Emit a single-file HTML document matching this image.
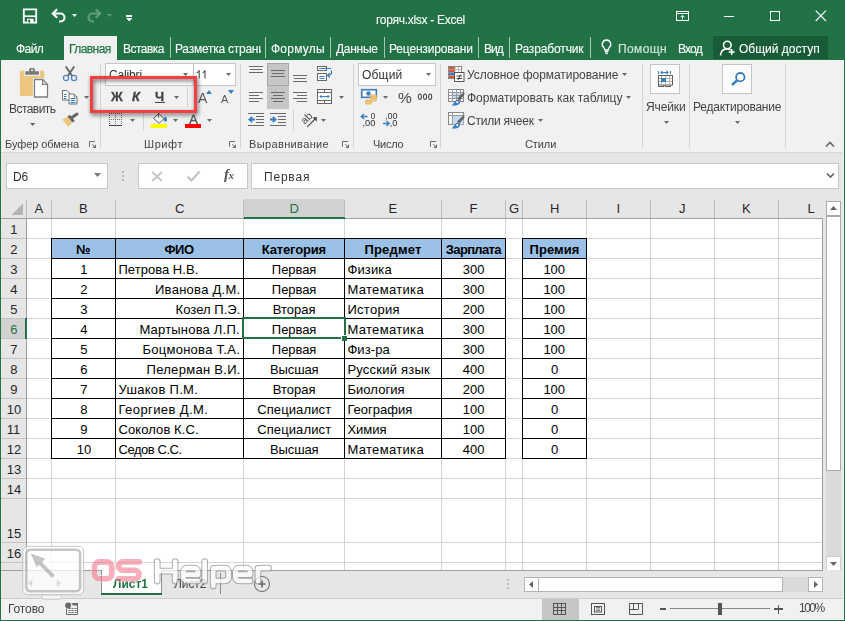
<!DOCTYPE html>
<html><head><meta charset="utf-8"><title>Excel</title>
<style>
html,body{margin:0;padding:0;}
body{width:845px;height:621px;position:relative;overflow:hidden;background:#217346;font-family:"Liberation Sans",sans-serif;}
.r{position:absolute;display:block;}
.t{position:absolute;white-space:nowrap;display:block;line-height:16px;}
.g{will-change:transform;}
</style></head><body>
<div class="r" style="left:0px;top:0px;width:845px;height:60px;background:#217346;"></div>
<svg class="r" style="left:22px;top:8px;" width="16" height="16" viewBox="0 0 16 16"><path d="M1.800 1.300h12.400v13.400h-12.400z" fill="none" stroke="#fff" stroke-width="1.800"/><path d="M1.800 8.200h12.400" stroke="#fff" stroke-width="1.600"/><path d="M5 14.500v-3.800h6.500v3.800z" fill="#fff"/><rect x="6.200" y="11.800" width="2" height="2.700" fill="#217346"/></svg>
<svg class="r" style="left:51px;top:8px;" width="16" height="15" viewBox="0 0 16 15"><path d="M2 5.500h7.500a4 4 0 0 1 0 8H8" fill="none" stroke="#fff" stroke-width="2.100"/><path d="M6.200 1.200L1.800 5.500L6.200 9.800" fill="none" stroke="#fff" stroke-width="2.100"/></svg>
<svg class="r" style="left:72px;top:14px;" width="5" height="3" viewBox="0 0 5 3"><path d="M0 0H5L2.5 3Z" fill="#fff"/></svg>
<svg class="r" style="left:86px;top:8px;opacity:.3;" width="16" height="15" viewBox="0 0 16 15"><path d="M14 5.500H6.500a4 4 0 0 0 0 8H8" fill="none" stroke="#fff" stroke-width="2.100"/><path d="M9.800 1.200L14.200 5.500L9.800 9.800" fill="none" stroke="#fff" stroke-width="2.100"/></svg>
<svg class="r" style="left:107px;top:14px;" width="5" height="3" viewBox="0 0 5 3"><path d="M0 0H5L2.5 3Z" fill="rgba(255,255,255,.3)"/></svg>
<div class="r" style="left:126px;top:15px;width:6px;height:1.5px;background:#fff;"></div>
<svg class="r" style="left:125.75px;top:17.55px;" width="6.5" height="3.5" viewBox="0 0 6.5 3.5"><path d="M0 0H6.5L3.25 3.5Z" fill="#fff"/></svg>
<span class="t g" style="left:376.30px;top:12px;font-size:12px;line-height:16px;color:#fff;letter-spacing:-0.288px;-webkit-text-stroke:.1px #fff;">горяч.xlsx - Excel</span>
<svg class="r" style="left:676px;top:11px;" width="14" height="11" viewBox="0 0 14 11"><rect x=".5" y=".5" width="12" height="9" fill="none" stroke="#fff"/><path d="M.5 2.500h12" stroke="#fff"/><path d="M6.500 8.500V4.500M4.500 6.300L6.500 4.300L8.500 6.300" fill="none" stroke="#fff"/></svg>
<div class="r" style="left:724px;top:16px;width:10px;height:1px;background:#fff;"></div>
<svg class="r" style="left:770px;top:11px;" width="11" height="11" viewBox="0 0 11 11"><rect x=".5" y=".5" width="9" height="9" fill="none" stroke="#fff"/></svg>
<svg class="r" style="left:815px;top:10px;" width="12" height="12" viewBox="0 0 12 12"><path d="M.7 .7L11 11M11 .7L.7 11" stroke="#fff" stroke-width="1.100"/></svg>
<div class="r" style="left:64px;top:36px;width:53px;height:24px;background:#f1f1f1;"></div>
<span class="t g" style="left:16.30px;top:41px;font-size:12px;line-height:16px;color:#fff;letter-spacing:-0.567px;-webkit-text-stroke:.1px #fff;">Файл</span>
<span class="t g" style="left:69.00px;top:41px;font-size:12px;line-height:16px;color:#217346;letter-spacing:-0.567px;-webkit-text-stroke:.25px #217346;">Главная</span>
<span class="t g" style="left:123.00px;top:41px;font-size:12px;line-height:16px;color:#fff;letter-spacing:-0.533px;-webkit-text-stroke:.1px #fff;">Вставка</span>
<div class="r" style="left:170px;top:37px;width:1px;height:21px;background:rgba(255,255,255,.6);"></div>
<div class="r" style="left:265px;top:37px;width:1px;height:21px;background:rgba(255,255,255,.6);"></div>
<div class="r" style="left:330px;top:37px;width:1px;height:21px;background:rgba(255,255,255,.6);"></div>
<div class="r" style="left:384px;top:37px;width:1px;height:21px;background:rgba(255,255,255,.6);"></div>
<div class="r" style="left:478px;top:37px;width:1px;height:21px;background:rgba(255,255,255,.6);"></div>
<div class="r" style="left:509px;top:37px;width:1px;height:21px;background:rgba(255,255,255,.6);"></div>
<div class="r" style="left:590px;top:37px;width:1px;height:21px;background:rgba(255,255,255,.6);"></div>
<span class="t g" style="left:175.00px;top:41px;font-size:12px;line-height:16px;color:#fff;letter-spacing:-0.243px;-webkit-text-stroke:.1px #fff;width:86.400px;overflow:hidden;">Разметка страни</span>
<span class="t g" style="left:271.00px;top:41px;font-size:12px;line-height:16px;color:#fff;letter-spacing:0.233px;-webkit-text-stroke:.1px #fff;">Формулы</span>
<span class="t g" style="left:336.20px;top:41px;font-size:12px;line-height:16px;color:#fff;letter-spacing:-0.280px;-webkit-text-stroke:.1px #fff;">Данные</span>
<span class="t g" style="left:389.40px;top:41px;font-size:12px;line-height:16px;color:#fff;letter-spacing:-0.167px;-webkit-text-stroke:.1px #fff;">Рецензировани</span>
<span class="t g" style="left:484.20px;top:41px;font-size:12px;line-height:16px;color:#fff;letter-spacing:-0.950px;-webkit-text-stroke:.1px #fff;">Вид</span>
<span class="t g" style="left:515.00px;top:41px;font-size:12px;line-height:16px;color:#fff;letter-spacing:-0.140px;-webkit-text-stroke:.1px #fff;">Разработчик</span>
<svg class="r" style="left:600px;top:39px;" width="13" height="16" viewBox="0 0 13 16"><path d="M6.500 1a4.300 4.300 0 0 0-2.600 7.700c.5.500.8 1.200.8 2.300h3.600c0-1.100.3-1.800.8-2.300A4.300 4.300 0 0 0 6.500 1z" fill="none" stroke="#fff" stroke-width="1.300"/><path d="M4.800 12.600h3.400M5.200 14.300h2.600" stroke="#fff" stroke-width="1.200"/></svg>
<span class="t g" style="left:618.40px;top:41px;font-size:12px;line-height:16px;color:#d0e3d8;letter-spacing:0.400px;-webkit-text-stroke:.2px #d0e3d8;">Помощн</span>
<span class="t g" style="left:678.20px;top:41px;font-size:12px;line-height:16px;color:#fff;letter-spacing:-0.833px;-webkit-text-stroke:.1px #fff;">Вход</span>
<div class="r" style="left:713px;top:36px;width:115px;height:23px;background:#185c37;"></div>
<svg class="r" style="left:719px;top:40px;" width="17" height="16" viewBox="0 0 17 16"><circle cx="8.300" cy="5" r="3.800" fill="none" stroke="#fff" stroke-width="1.600"/><path d="M1.500 15.500c.3-4 2.500-6.600 6.800-6.600 1.500 0 2.600.3 3.500 1" fill="none" stroke="#fff" stroke-width="1.600"/><path d="M12.700 9v6M9.700 12h6" stroke="#fff" stroke-width="1.500"/></svg>
<span class="t g" style="left:739.00px;top:41px;font-size:12px;line-height:16px;color:#fff;-webkit-text-stroke:.1px #fff;">Общий доступ</span>
<div class="r" style="left:1px;top:60px;width:842px;height:92px;background:#f1f1f1;"></div>
<div class="r" style="left:1px;top:152px;width:842px;height:1px;background:#d9d9d9;"></div>
<div class="r" style="left:1px;top:153px;width:842px;height:46px;background:#e6e6e6;"></div>
<div class="r" style="left:100px;top:64px;width:1px;height:84px;background:#d4d4d4;"></div>
<div class="r" style="left:240px;top:64px;width:1px;height:84px;background:#d4d4d4;"></div>
<div class="r" style="left:353px;top:64px;width:1px;height:84px;background:#d4d4d4;"></div>
<div class="r" style="left:440px;top:64px;width:1px;height:84px;background:#d4d4d4;"></div>
<div class="r" style="left:642px;top:64px;width:1px;height:84px;background:#d4d4d4;"></div>
<div class="r" style="left:689px;top:64px;width:1px;height:84px;background:#d4d4d4;"></div>
<div class="r" style="left:785px;top:64px;width:1px;height:84px;background:#d4d4d4;"></div>
<svg class="r" style="left:19px;top:66px;" width="31" height="33" viewBox="0 0 31 33"><rect x=".9" y="4.600" width="24.400" height="25.500" rx="1.800" fill="#ecc67e"/><rect x="5.200" y="4" width="15.900" height="5.900" fill="#f1f1f1"/><rect x="6.200" y="5.200" width="13.800" height="3.500" rx=".7" fill="#7a7a7a"/><rect x="10.100" y="2.100" width="5.800" height="4.500" rx="1.600" fill="#7a7a7a"/><circle cx="13" cy="4.300" r="1" fill="#f4f4f4"/><path d="M15.500 13.500H23.600L28.500 18.400V31H15.500z" fill="#fff" stroke="#f1f1f1" stroke-width="3.200"/><path d="M15.500 13.500H23.600L28.500 18.400V31H15.500z" fill="#fff" stroke="#7e7e7e" stroke-width="1.300"/><path d="M23.600 13.500V18.400H28.500" fill="none" stroke="#7e7e7e" stroke-width="1.300"/></svg>
<span class="t g" style="left:8.60px;top:101px;font-size:12px;line-height:16px;color:#444;letter-spacing:-0.543px;">Вставить</span>
<svg class="r" style="left:30px;top:122.9px;" width="5.2" height="3" viewBox="0 0 5.2 3"><path d="M0 0H5.2L2.6 3Z" fill="#6a6a6a"/></svg>
<svg class="r" style="left:62px;top:65px;" width="16" height="17" viewBox="0 0 16 17"><path d="M3.800 1.500L10.200 11M12.200 1.500L5.800 11" stroke="#6a6a6a" stroke-width="2" fill="none"/><circle cx="4" cy="13" r="2.600" fill="none" stroke="#4a86c5" stroke-width="1.200"/><circle cx="12" cy="13" r="2.600" fill="none" stroke="#4a86c5" stroke-width="1.200"/></svg>
<svg class="r" style="left:61px;top:89px;" width="17" height="16" viewBox="0 0 17 16"><path d="M1.500 1.500h4.500l2.500 2.500v7h-7z" fill="#fff" stroke="#6e6e6e"/><path d="M3 5.500h2.500M3 7.500h2.500M3 9.500h2" stroke="#3a7ebf"/><path d="M8 5h5l3 3v7h-8z" fill="#fff" stroke="#6e6e6e"/><path d="M13 5v3h3" fill="none" stroke="#6e6e6e" stroke-width=".8"/><path d="M9.500 9.500h5M9.500 11.500h5M9.500 13.500h5" stroke="#3a7ebf"/></svg>
<svg class="r" style="left:83.5px;top:95.5px;" width="5" height="3" viewBox="0 0 5 3"><path d="M0 0H5L2.5 3Z" fill="#6a6a6a"/></svg>
<svg class="r" style="left:62px;top:112px;" width="17" height="16" viewBox="0 0 17 16"><path d="M.4 7.500L5.500 4.500L10.500 10.500L6 14.700z" fill="#ecc67e"/><path d="M5.500 4.500L7.800 2.800L12.800 8.800L10.500 10.500z" fill="#666"/><path d="M10.300 5.300L15 2" stroke="#666" stroke-width="3" stroke-linecap="round"/></svg>
<span class="t g" style="left:4.70px;top:137px;font-size:11px;line-height:14px;color:#444;letter-spacing:-0.064px;">Буфер обмена</span>
<svg class="r" style="left:89px;top:141px;" width="8" height="8" viewBox="0 0 8 8"><path d="M.5 5.800V.5H6" fill="none" stroke="#6e6e6e"/><path d="M3.200 3.200L5.500 5.500" stroke="#6e6e6e"/><path d="M7 3.300V7H3.300z" fill="#6e6e6e"/></svg>
<div class="r" style="left:105px;top:63px;width:89px;height:23px;background:#fff;border:1px solid #c6c6c6;box-sizing:border-box;"></div>
<div class="r" style="left:193px;top:63px;width:43px;height:23px;background:#fff;border:1px solid #c6c6c6;box-sizing:border-box;"></div>
<span class="t g" style="left:108.70px;top:67px;font-size:12px;line-height:16px;color:#333;letter-spacing:-0.150px;">Calibri</span>
<svg class="r" style="left:183px;top:73px;" width="5" height="3" viewBox="0 0 5 3"><path d="M0 0H5L2.5 3Z" fill="#6a6a6a"/></svg>
<svg class="r" style="left:196px;top:69.5px;" width="11" height="9" viewBox="0 0 11 9"><path d="M.9 2.900L3.200 .9V8.600M6.700 2.900L9 .9V8.600" stroke="#444" stroke-width="1.050" fill="none"/></svg>
<svg class="r" style="left:225.5px;top:73px;" width="5" height="3" viewBox="0 0 5 3"><path d="M0 0H5L2.5 3Z" fill="#6a6a6a"/></svg>
<span class="t g" style="left:110.60px;top:88px;font-size:13px;line-height:17px;color:#444;font-weight:bold;-webkit-text-stroke:.3px #444;">Ж</span>
<span class="t g" style="left:132.40px;top:88px;font-size:13px;line-height:17px;color:#444;font-weight:bold;font-style:italic;-webkit-text-stroke:.3px #444;">К</span>
<span class="t g" style="left:155.00px;top:88px;font-size:13px;line-height:17px;color:#444;font-weight:bold;-webkit-text-stroke:.3px #444;">Ч</span>
<div class="r" style="left:155px;top:102px;width:10px;height:1px;background:#444;"></div>
<svg class="r" style="left:174px;top:95.5px;" width="5" height="3" viewBox="0 0 5 3"><path d="M0 0H5L2.5 3Z" fill="#6a6a6a"/></svg>
<div class="r" style="left:187px;top:87px;width:1px;height:20px;background:#d4d4d4;"></div>
<span class="t g" style="left:198.40px;top:89px;font-size:14px;line-height:18px;color:#555;">A</span>
<svg class="r" style="left:205.5px;top:89.5px;" width="6" height="4" viewBox="0 0 6 4"><path d="M0 4L3 0L6 4z" fill="#3a7ebf"/></svg>
<span class="t g" style="left:221.40px;top:92px;font-size:11px;line-height:14px;color:#555;">A</span>
<svg class="r" style="left:227.5px;top:89.8px;" width="6" height="4" viewBox="0 0 6 4"><path d="M0 0H6L3 4z" fill="#3a7ebf"/></svg>
<svg class="r" style="left:109px;top:113px;shape-rendering:crispEdges;" width="14" height="14" viewBox="0 0 14 14"><path d="M0 .5h13M0 6.500h13" stroke="#6a6a6a" stroke-dasharray="1 1" fill="none"/><path d="M.5 0v12M6.500 0v12M12.500 0v12" stroke="#6a6a6a" stroke-dasharray="1 1" fill="none"/><path d="M0 12.500h13" stroke="#444" stroke-width="1"/></svg>
<svg class="r" style="left:129.8px;top:119px;" width="5" height="3" viewBox="0 0 5 3"><path d="M0 0H5L2.5 3Z" fill="#6a6a6a"/></svg>
<div class="r" style="left:143px;top:113px;width:1px;height:18px;background:#d4d4d4;"></div>
<svg class="r" style="left:151px;top:110px;" width="17" height="15" viewBox="0 0 17 15"><path d="M7.800 3.600L13 8.600L8 13.300L2.600 8.300z" fill="#fff" stroke="#555" stroke-width=".95"/><path d="M7.600 7.500V1.500" stroke="#555" stroke-width=".95"/><path d="M14.300 6c1.300 1.700 1.800 2.900 1.800 3.900a1.700 1.700 0 0 1-3.400 0c0-1 .5-2.200 1.600-3.900z" fill="#3a7ebf"/></svg>
<div class="r" style="left:151px;top:124px;width:16px;height:4px;background:#ffff00;"></div>
<svg class="r" style="left:173px;top:119px;" width="5" height="3" viewBox="0 0 5 3"><path d="M0 0H5L2.5 3Z" fill="#6a6a6a"/></svg>
<span class="t g" style="left:188.80px;top:111px;font-size:13.5px;line-height:17px;color:#555;-webkit-text-stroke:.35px #555;">A</span>
<div class="r" style="left:185px;top:124px;width:16px;height:4px;background:#ff0000;"></div>
<svg class="r" style="left:206.9px;top:119px;" width="5" height="3" viewBox="0 0 5 3"><path d="M0 0H5L2.5 3Z" fill="#6a6a6a"/></svg>
<span class="t g" style="left:143.70px;top:137px;font-size:11px;line-height:14px;color:#444;letter-spacing:0.575px;">Шрифт</span>
<svg class="r" style="left:229px;top:141px;" width="8" height="8" viewBox="0 0 8 8"><path d="M.5 5.800V.5H6" fill="none" stroke="#6e6e6e"/><path d="M3.200 3.200L5.500 5.500" stroke="#6e6e6e"/><path d="M7 3.300V7H3.300z" fill="#6e6e6e"/></svg>
<div class="r" style="left:267px;top:63px;width:22px;height:23px;background:#c6c6c6;border:1px solid #a6a6a6;box-sizing:border-box;"></div>
<div class="r" style="left:267px;top:86px;width:22px;height:23px;background:#c6c6c6;"></div>
<div class="r" style="left:249px;top:66px;width:14px;height:1px;background:#6a6a6a;"></div>
<div class="r" style="left:250px;top:69px;width:12px;height:1px;background:#6a6a6a;"></div>
<div class="r" style="left:249px;top:72px;width:14px;height:1px;background:#6a6a6a;"></div>
<div class="r" style="left:271px;top:70px;width:14px;height:1px;background:#6a6a6a;"></div>
<div class="r" style="left:272px;top:73px;width:12px;height:1px;background:#6a6a6a;"></div>
<div class="r" style="left:271px;top:76px;width:14px;height:1px;background:#6a6a6a;"></div>
<div class="r" style="left:293px;top:75px;width:14px;height:1px;background:#6a6a6a;"></div>
<div class="r" style="left:294px;top:78px;width:12px;height:1px;background:#6a6a6a;"></div>
<div class="r" style="left:293px;top:81px;width:14px;height:1px;background:#6a6a6a;"></div>
<div class="r" style="left:249px;top:92px;width:14px;height:1px;background:#6a6a6a;"></div>
<div class="r" style="left:249px;top:95px;width:10px;height:1px;background:#6a6a6a;"></div>
<div class="r" style="left:249px;top:98px;width:14px;height:1px;background:#6a6a6a;"></div>
<div class="r" style="left:249px;top:101px;width:10px;height:1px;background:#6a6a6a;"></div>
<div class="r" style="left:271px;top:92px;width:14px;height:1px;background:#6a6a6a;"></div>
<div class="r" style="left:273px;top:95px;width:10px;height:1px;background:#6a6a6a;"></div>
<div class="r" style="left:271px;top:98px;width:14px;height:1px;background:#6a6a6a;"></div>
<div class="r" style="left:273px;top:101px;width:10px;height:1px;background:#6a6a6a;"></div>
<div class="r" style="left:293px;top:92px;width:14px;height:1px;background:#6a6a6a;"></div>
<div class="r" style="left:297px;top:95px;width:10px;height:1px;background:#6a6a6a;"></div>
<div class="r" style="left:293px;top:98px;width:14px;height:1px;background:#6a6a6a;"></div>
<div class="r" style="left:297px;top:101px;width:10px;height:1px;background:#6a6a6a;"></div>
<svg class="r" style="left:317px;top:66px;" width="17" height="16" viewBox="0 0 17 16"><rect x=".5" y=".5" width="9" height="4" fill="#fff" stroke="#666"/><path d="M2 2.500h12" stroke="#3a7ebf"/><rect x=".5" y="7.500" width="9" height="7" fill="#fff" stroke="#666"/><path d="M2.500 10.500h5M2.500 12.500h5" stroke="#3a7ebf"/><path d="M14 4.500c1.500 2 .5 5-3 5" fill="none" stroke="#3a7ebf" stroke-width="1.200"/><path d="M12.800 7.300L10.500 9.500L12.800 11.500" fill="none" stroke="#3a7ebf" stroke-width="1.200"/></svg>
<svg class="r" style="left:317px;top:89px;" width="16" height="15" viewBox="0 0 16 15"><rect x=".5" y=".5" width="14" height="14" fill="#fff" stroke="#666"/><path d="M.5 3.500h14M.5 11.500h14M7.500 .5v3M7.500 11.500v3" stroke="#666"/><path d="M3 7.500h9M4.500 6L3 7.500L4.500 9M10.500 6L12 7.500L10.500 9" fill="none" stroke="#3a7ebf" stroke-width="1"/></svg>
<svg class="r" style="left:338.9px;top:95.5px;" width="5" height="3" viewBox="0 0 5 3"><path d="M0 0H5L2.5 3Z" fill="#6a6a6a"/></svg>
<svg class="r" style="left:248px;top:113px;" width="17" height="13" viewBox="0 0 17 13"><path d="M0 .5h16M8 3.500h8M8 6.500h8M8 9.500h8M0 12.500h16" stroke="#6a6a6a"/><path d="M7 6.500H1.500M4.200 3.800L1.400 6.500L4.200 9.200" fill="none" stroke="#3a7ebf" stroke-width="1.800"/></svg>
<svg class="r" style="left:270px;top:113px;" width="17" height="13" viewBox="0 0 17 13"><path d="M0 .5h16M8 3.500h8M8 6.500h8M8 9.500h8M0 12.500h16" stroke="#6a6a6a"/><path d="M0 6.500H5.500M2.800 3.800L5.600 6.500L2.800 9.200" fill="none" stroke="#3a7ebf" stroke-width="1.800"/></svg>
<div class="r" style="left:293px;top:110px;width:1px;height:21px;background:#d4d4d4;"></div>
<svg class="r" style="left:300px;top:111px;" width="18" height="17" viewBox="0 0 18 17"><text transform="translate(4.800 13.800) rotate(-45)" font-family="Liberation Sans" font-size="10.500" fill="#4a4a4a">ab</text><path d="M7.300 15.800L16.500 6.500" fill="none" stroke="#4a4a4a" stroke-width="1.200"/><path d="M12.300 6.200H16.800V10.700z" fill="#4a4a4a"/></svg>
<svg class="r" style="left:321.2px;top:119px;" width="5" height="3" viewBox="0 0 5 3"><path d="M0 0H5L2.5 3Z" fill="#6a6a6a"/></svg>
<span class="t g" style="left:249.00px;top:137px;font-size:11px;line-height:14px;color:#444;letter-spacing:0.364px;">Выравнивание</span>
<svg class="r" style="left:342px;top:141px;" width="8" height="8" viewBox="0 0 8 8"><path d="M.5 5.800V.5H6" fill="none" stroke="#6e6e6e"/><path d="M3.200 3.200L5.500 5.500" stroke="#6e6e6e"/><path d="M7 3.300V7H3.300z" fill="#6e6e6e"/></svg>
<div class="r" style="left:358px;top:63px;width:78px;height:23px;background:#fff;border:1px solid #c6c6c6;box-sizing:border-box;"></div>
<span class="t g" style="left:361.70px;top:67px;font-size:12px;line-height:16px;color:#333;letter-spacing:0.200px;">Общий</span>
<svg class="r" style="left:425.8px;top:73px;" width="5" height="3" viewBox="0 0 5 3"><path d="M0 0H5L2.5 3Z" fill="#6a6a6a"/></svg>
<svg class="r" style="left:360px;top:88px;" width="19" height="18" viewBox="0 0 19 18"><rect x="1.700" y="1.700" width="14.600" height="7.600" fill="#fff" stroke="#3a7ebf" stroke-width="1.600"/><circle cx="8.500" cy="5.500" r="2.200" fill="#3a7ebf"/><g fill="#f3c987" stroke="#e0a850" stroke-width=".5"><ellipse cx="13.500" cy="8" rx="3.400" ry="1.300"/><ellipse cx="13.500" cy="10" rx="3.400" ry="1.300"/><ellipse cx="13.500" cy="12" rx="3.400" ry="1.300"/><ellipse cx="8.500" cy="13" rx="3.400" ry="1.300"/><ellipse cx="8.500" cy="15" rx="3.400" ry="1.300"/></g></svg>
<svg class="r" style="left:382.8px;top:95.5px;" width="5" height="3" viewBox="0 0 5 3"><path d="M0 0H5L2.5 3Z" fill="#6a6a6a"/></svg>
<span class="t g" style="left:397.50px;top:88px;font-size:15.5px;line-height:19px;color:#444;">%</span>
<svg class="r" style="left:417px;top:93px;" width="16" height="8" viewBox="0 0 16 8"><g fill="none" stroke="#444" stroke-width="1.050"><ellipse cx="2.850" cy="3.700" rx="1.550" ry="2.700"/><ellipse cx="8" cy="3.700" rx="1.550" ry="2.700"/><ellipse cx="13.150" cy="3.700" rx="1.550" ry="2.700"/></g></svg>
<svg class="r" style="left:360px;top:112px;" width="18" height="16" viewBox="0 0 18 16"><path d="M7.500 4.500H1.500M4 2L1.300 4.500L4 7" fill="none" stroke="#3a7ebf" stroke-width="1.400"/><text x="10.800" y="7.200" font-family="Liberation Sans" font-size="8.800" fill="#333" textLength="4.600" lengthAdjust="spacingAndGlyphs">0</text><text x="2.500" y="14.300" font-family="Liberation Sans" font-size="8.800" fill="#333" textLength="13" lengthAdjust="spacingAndGlyphs">,00</text></svg>
<svg class="r" style="left:382px;top:112px;" width="18" height="16" viewBox="0 0 18 16"><text x="3" y="7.200" font-family="Liberation Sans" font-size="8.800" fill="#333" textLength="12.500" lengthAdjust="spacingAndGlyphs">,00</text><path d="M1 11.500h6M4.500 9L7.200 11.500L4.500 14" fill="none" stroke="#3a7ebf" stroke-width="1.400"/><text x="7.700" y="14.300" font-family="Liberation Sans" font-size="8.800" fill="#333" textLength="7.700" lengthAdjust="spacingAndGlyphs">,0</text></svg>
<span class="t g" style="left:373.40px;top:137px;font-size:11px;line-height:14px;color:#444;letter-spacing:-0.225px;">Число</span>
<svg class="r" style="left:430px;top:141px;" width="8" height="8" viewBox="0 0 8 8"><path d="M.5 5.800V.5H6" fill="none" stroke="#6e6e6e"/><path d="M3.200 3.200L5.500 5.500" stroke="#6e6e6e"/><path d="M7 3.300V7H3.300z" fill="#6e6e6e"/></svg>
<svg class="r" style="left:448px;top:66px;" width="17" height="17" viewBox="0 0 17 17"><rect x=".5" y=".5" width="13" height="12" fill="#fff" stroke="#888"/><rect x="1" y="1" width="6" height="5" fill="#d9553f"/><rect x="1" y="6" width="6" height="3.500" fill="#3a7ebf"/><rect x="1" y="9.500" width="6" height="2.500" fill="#d9553f"/><path d="M7 .5v12M.5 3.500h13M.5 6.500h13M.5 9.500h13M10.500 .5v6" stroke="#aaa" stroke-width=".8"/><rect x="6.500" y="6.500" width="9.500" height="9" fill="#fff" stroke="#555"/><path d="M8.500 10h5.500M8.500 12.500h5.500M12.500 8.500L10 14" stroke="#333" stroke-width=".9"/></svg>
<span class="t g" style="left:467.30px;top:67px;font-size:12px;line-height:16px;color:#444;letter-spacing:-0.059px;">Условное форматирование</span>
<svg class="r" style="left:621.9px;top:73px;" width="5" height="3" viewBox="0 0 5 3"><path d="M0 0H5L2.5 3Z" fill="#6a6a6a"/></svg>
<svg class="r" style="left:448px;top:89px;" width="17" height="17" viewBox="0 0 17 17"><rect x=".5" y=".5" width="15" height="12" fill="#fff" stroke="#888"/><rect x="4.500" y="3.500" width="8" height="6" fill="#c5daef"/><path d="M.5 3.500h15M.5 6.500h15M.5 9.500h15M4.500 .5v12M8.500 .5v12M12.500 .5v12" stroke="#999"/><path d="M16.300 2.500L9 9.500L11.300 11.800L16.300 6z" fill="#666"/><path d="M3.500 16.300c1.500-.6 2.200-2.800 4.200-4.800 1.100-1.100 2.800-1 3.700 0 .9 1 .8 2.600-.3 3.400-2.200 1.700-5 2-7.600 1.400z" fill="#3a7ebf"/><circle cx="9.300" cy="13.200" r="1.100" fill="#fff"/></svg>
<span class="t g" style="left:467.30px;top:90px;font-size:12px;line-height:16px;color:#444;letter-spacing:-0.029px;">Форматировать как таблицу</span>
<svg class="r" style="left:625.8px;top:96px;" width="5" height="3" viewBox="0 0 5 3"><path d="M0 0H5L2.5 3Z" fill="#6a6a6a"/></svg>
<svg class="r" style="left:448px;top:112px;" width="17" height="17" viewBox="0 0 17 17"><rect x=".5" y=".5" width="15" height="12" fill="#fff" stroke="#888"/><rect x="4.500" y="3.500" width="11" height="9" fill="#c5daef"/><path d="M.5 3.500h15M4.500 .5v12" stroke="#999"/><path d="M16.300 2.500L9 9.500L11.300 11.800L16.300 6z" fill="#666"/><path d="M3.500 16.300c1.500-.6 2.200-2.800 4.200-4.800 1.100-1.100 2.800-1 3.700 0 .9 1 .8 2.600-.3 3.400-2.200 1.700-5 2-7.600 1.400z" fill="#3a7ebf"/><circle cx="9.300" cy="13.200" r="1.100" fill="#fff"/></svg>
<span class="t g" style="left:467.30px;top:113px;font-size:12px;line-height:16px;color:#444;letter-spacing:-0.230px;">Стили ячеек</span>
<svg class="r" style="left:538.1px;top:119px;" width="5" height="3" viewBox="0 0 5 3"><path d="M0 0H5L2.5 3Z" fill="#6a6a6a"/></svg>
<span class="t g" style="left:525.20px;top:137px;font-size:11px;line-height:14px;color:#444;letter-spacing:-0.100px;">Стили</span>
<div class="r" style="left:650px;top:64px;width:30px;height:30px;background:#fbfbfb;border:1px solid #c4c4c4;box-sizing:border-box;"></div>
<svg class="r" style="left:657px;top:70px;" width="17" height="18" viewBox="0 0 17 18"><path d="M1.500 1v3M13.500 1v3M4 2.500h7M5.500 1L4 2.500L5.500 4M9.500 1L11 2.500L9.500 4" fill="none" stroke="#3a7ebf" stroke-width="1.100"/><rect x="1.500" y="5.500" width="14" height="9.500" fill="#fff" stroke="#5e5e5e"/><path d="M4.500 6v8.500M8.500 6v8.500M12.500 6v8.500M2 8.500h13M2 11.500h13" stroke="#b4b4b4"/><rect x="4" y="8" width="5" height="4" fill="#3a7ebf"/><path d="M1.500 15v1.500h5.500v-1.500M8.500 15v1.500h5v-1.500" fill="none" stroke="#5e5e5e"/></svg>
<span class="t g" style="left:646.00px;top:99px;font-size:12px;line-height:16px;color:#444;letter-spacing:-0.120px;">Ячейки</span>
<svg class="r" style="left:663.5px;top:121px;" width="5" height="3" viewBox="0 0 5 3"><path d="M0 0H5L2.5 3Z" fill="#6a6a6a"/></svg>
<div class="r" style="left:722px;top:64px;width:30px;height:30px;background:#fbfbfb;border:1px solid #c4c4c4;box-sizing:border-box;"></div>
<svg class="r" style="left:730px;top:71px;" width="16" height="16" viewBox="0 0 16 16"><circle cx="10.300" cy="6.200" r="4.200" fill="#fff" stroke="#3a7ebf" stroke-width="1.800"/><path d="M7 9.500L2 14" stroke="#3a7ebf" stroke-width="2.400"/></svg>
<span class="t g" style="left:693.00px;top:99px;font-size:12px;line-height:16px;color:#444;letter-spacing:-0.231px;">Редактирование</span>
<svg class="r" style="left:734.9px;top:121px;" width="5" height="3" viewBox="0 0 5 3"><path d="M0 0H5L2.5 3Z" fill="#6a6a6a"/></svg>
<svg class="r" style="left:825px;top:141px;" width="10" height="6" viewBox="0 0 10 6"><path d="M1 5.500L5 1.500L9 5.500" fill="none" stroke="#666" stroke-width="1.600"/></svg>
<div class="r" style="left:90px;top:76px;width:107px;height:37px;box-sizing:border-box;border:3px solid #f83e3e;filter:drop-shadow(1.500px 2.500px 2.200px rgba(0,0,0,.62));"></div>
<div class="r" style="left:6px;top:163px;width:102px;height:26px;background:#fff;border:1px solid #c8c8c8;box-sizing:border-box;"></div>
<span class="t g" style="left:13.30px;top:169px;font-size:12px;line-height:16px;color:#333;letter-spacing:-0.100px;">D6</span>
<svg class="r" style="left:93.6px;top:173px;" width="7" height="4" viewBox="0 0 7 4"><path d="M0 0H7L3.5 4Z" fill="#777"/></svg>
<div class="r" style="left:122px;top:171px;width:2px;height:2px;background:#bcbcbc;"></div>
<div class="r" style="left:122px;top:175px;width:2px;height:2px;background:#bcbcbc;"></div>
<div class="r" style="left:122px;top:179px;width:2px;height:2px;background:#bcbcbc;"></div>
<div class="r" style="left:138px;top:163px;width:110px;height:26px;background:#fff;border:1px solid #c8c8c8;box-sizing:border-box;"></div>
<svg class="r" style="left:151px;top:171px;" width="12" height="11" viewBox="0 0 12 11"><path d="M1 1L11 10M11 1L1 10" stroke="#c4c4c4" stroke-width="1.700"/></svg>
<svg class="r" style="left:186px;top:170px;" width="15" height="12" viewBox="0 0 15 12"><path d="M1.500 6.500L5.500 10.500L13.500 1.500" fill="none" stroke="#c6c6c6" stroke-width="2.300"/></svg>
<span class="t g" style="left:223.800px;top:166.300px;font-family:'Liberation Serif',serif;font-style:italic;font-weight:bold;font-size:15px;color:#555;letter-spacing:-.5px;">f<span style="font-size:11px;">x</span></span>
<div class="r" style="left:251px;top:163px;width:588px;height:26px;background:#fff;border:1px solid #c8c8c8;box-sizing:border-box;"></div>
<span class="t g" style="left:263.50px;top:169px;font-size:12px;line-height:16px;color:#333;letter-spacing:0.800px;">Первая</span>
<svg class="r" style="left:826px;top:172px;" width="9" height="7" viewBox="0 0 9 7"><path d="M1 1.500L4.500 5L8 1.500" fill="none" stroke="#666" stroke-width="1.700"/></svg>
<div class="r" style="left:1px;top:199px;width:842px;height:371px;background:#e6e6e6;"></div>
<div class="r" style="left:26px;top:218px;width:796px;height:352px;background:#fff;"></div>
<div class="r" style="left:51px;top:219px;width:1px;height:351px;background:#d4d4d4;"></div>
<div class="r" style="left:115px;top:219px;width:1px;height:351px;background:#d4d4d4;"></div>
<div class="r" style="left:243px;top:219px;width:1px;height:351px;background:#d4d4d4;"></div>
<div class="r" style="left:344px;top:219px;width:1px;height:351px;background:#d4d4d4;"></div>
<div class="r" style="left:441px;top:219px;width:1px;height:351px;background:#d4d4d4;"></div>
<div class="r" style="left:505px;top:219px;width:1px;height:351px;background:#d4d4d4;"></div>
<div class="r" style="left:522px;top:219px;width:1px;height:351px;background:#d4d4d4;"></div>
<div class="r" style="left:586px;top:219px;width:1px;height:351px;background:#d4d4d4;"></div>
<div class="r" style="left:650px;top:219px;width:1px;height:351px;background:#d4d4d4;"></div>
<div class="r" style="left:714px;top:219px;width:1px;height:351px;background:#d4d4d4;"></div>
<div class="r" style="left:778px;top:219px;width:1px;height:351px;background:#d4d4d4;"></div>
<div class="r" style="left:27px;top:238px;width:795px;height:1px;background:#d4d4d4;"></div>
<div class="r" style="left:27px;top:258px;width:795px;height:1px;background:#d4d4d4;"></div>
<div class="r" style="left:27px;top:278px;width:795px;height:1px;background:#d4d4d4;"></div>
<div class="r" style="left:27px;top:298px;width:795px;height:1px;background:#d4d4d4;"></div>
<div class="r" style="left:27px;top:318px;width:795px;height:1px;background:#d4d4d4;"></div>
<div class="r" style="left:27px;top:338px;width:795px;height:1px;background:#d4d4d4;"></div>
<div class="r" style="left:27px;top:358px;width:795px;height:1px;background:#d4d4d4;"></div>
<div class="r" style="left:27px;top:378px;width:795px;height:1px;background:#d4d4d4;"></div>
<div class="r" style="left:27px;top:398px;width:795px;height:1px;background:#d4d4d4;"></div>
<div class="r" style="left:27px;top:418px;width:795px;height:1px;background:#d4d4d4;"></div>
<div class="r" style="left:27px;top:438px;width:795px;height:1px;background:#d4d4d4;"></div>
<div class="r" style="left:27px;top:458px;width:795px;height:1px;background:#d4d4d4;"></div>
<div class="r" style="left:27px;top:478px;width:795px;height:1px;background:#d4d4d4;"></div>
<div class="r" style="left:27px;top:498px;width:795px;height:1px;background:#d4d4d4;"></div>
<div class="r" style="left:27px;top:542px;width:795px;height:1px;background:#d4d4d4;"></div>
<div class="r" style="left:27px;top:562px;width:795px;height:1px;background:#d4d4d4;"></div>
<div class="r" style="left:1px;top:218px;width:821px;height:1px;background:#9e9e9e;"></div>
<div class="r" style="left:26px;top:219px;width:1px;height:351px;background:#9e9e9e;"></div>
<div class="r" style="left:26px;top:200px;width:1px;height:18px;background:#bdbdbd;"></div>
<div class="r" style="left:51px;top:200px;width:1px;height:18px;background:#bdbdbd;"></div>
<div class="r" style="left:115px;top:200px;width:1px;height:18px;background:#bdbdbd;"></div>
<div class="r" style="left:243px;top:200px;width:1px;height:18px;background:#bdbdbd;"></div>
<div class="r" style="left:344px;top:200px;width:1px;height:18px;background:#bdbdbd;"></div>
<div class="r" style="left:441px;top:200px;width:1px;height:18px;background:#bdbdbd;"></div>
<div class="r" style="left:505px;top:200px;width:1px;height:18px;background:#bdbdbd;"></div>
<div class="r" style="left:522px;top:200px;width:1px;height:18px;background:#bdbdbd;"></div>
<div class="r" style="left:586px;top:200px;width:1px;height:18px;background:#bdbdbd;"></div>
<div class="r" style="left:650px;top:200px;width:1px;height:18px;background:#bdbdbd;"></div>
<div class="r" style="left:714px;top:200px;width:1px;height:18px;background:#bdbdbd;"></div>
<div class="r" style="left:778px;top:200px;width:1px;height:18px;background:#bdbdbd;"></div>
<div class="r" style="left:244px;top:199px;width:100px;height:18px;background:#d2d2d2;"></div>
<div class="r" style="left:244px;top:217px;width:101px;height:2px;background:#217346;"></div>
<span class="t" style="left:34.50px;top:200px;font-size:13px;line-height:17px;color:#262626;">A</span>
<span class="t" style="left:79.00px;top:200px;font-size:13px;line-height:17px;color:#262626;">B</span>
<span class="t" style="left:175.00px;top:200px;font-size:13px;line-height:17px;color:#262626;">C</span>
<span class="t" style="left:289.50px;top:200px;font-size:13px;line-height:17px;color:#217346;">D</span>
<span class="t" style="left:388.50px;top:200px;font-size:13px;line-height:17px;color:#262626;">E</span>
<span class="t" style="left:469.50px;top:200px;font-size:13px;line-height:17px;color:#262626;">F</span>
<span class="t" style="left:509.00px;top:200px;font-size:13px;line-height:17px;color:#262626;">G</span>
<span class="t" style="left:550.00px;top:200px;font-size:13px;line-height:17px;color:#262626;">H</span>
<span class="t" style="left:616.50px;top:200px;font-size:13px;line-height:17px;color:#262626;">I</span>
<span class="t" style="left:679.00px;top:200px;font-size:13px;line-height:17px;color:#262626;">J</span>
<span class="t" style="left:742.00px;top:200px;font-size:13px;line-height:17px;color:#262626;">K</span>
<span class="t" style="left:807.50px;top:200px;font-size:13px;line-height:17px;color:#262626;">L</span>
<svg class="r" style="left:11px;top:203px;" width="13" height="13" viewBox="0 0 13 13"><path d="M12 .5V12H.5z" fill="#b4b4b4"/></svg>
<span class="t" style="left:10.30px;top:221px;font-size:13px;line-height:17px;color:#262626;">1</span>
<div class="r" style="left:1px;top:238px;width:25px;height:1px;background:#c4c4c4;"></div>
<span class="t" style="left:10.30px;top:241px;font-size:13px;line-height:17px;color:#262626;">2</span>
<div class="r" style="left:1px;top:258px;width:25px;height:1px;background:#c4c4c4;"></div>
<span class="t" style="left:10.30px;top:261px;font-size:13px;line-height:17px;color:#262626;">3</span>
<div class="r" style="left:1px;top:278px;width:25px;height:1px;background:#c4c4c4;"></div>
<span class="t" style="left:10.30px;top:281px;font-size:13px;line-height:17px;color:#262626;">4</span>
<div class="r" style="left:1px;top:298px;width:25px;height:1px;background:#c4c4c4;"></div>
<span class="t" style="left:10.30px;top:301px;font-size:13px;line-height:17px;color:#262626;">5</span>
<div class="r" style="left:1px;top:319px;width:25px;height:19px;background:#d2d2d2;"></div>
<div class="r" style="left:1px;top:318px;width:25px;height:1px;background:#c4c4c4;"></div>
<span class="t" style="left:10.30px;top:321px;font-size:13px;line-height:17px;color:#217346;">6</span>
<div class="r" style="left:1px;top:338px;width:25px;height:1px;background:#c4c4c4;"></div>
<span class="t" style="left:10.30px;top:341px;font-size:13px;line-height:17px;color:#262626;">7</span>
<div class="r" style="left:1px;top:358px;width:25px;height:1px;background:#c4c4c4;"></div>
<span class="t" style="left:10.30px;top:361px;font-size:13px;line-height:17px;color:#262626;">8</span>
<div class="r" style="left:1px;top:378px;width:25px;height:1px;background:#c4c4c4;"></div>
<span class="t" style="left:10.30px;top:381px;font-size:13px;line-height:17px;color:#262626;">9</span>
<div class="r" style="left:1px;top:398px;width:25px;height:1px;background:#c4c4c4;"></div>
<span class="t" style="left:6.80px;top:401px;font-size:13px;line-height:17px;color:#262626;">10</span>
<div class="r" style="left:1px;top:418px;width:25px;height:1px;background:#c4c4c4;"></div>
<span class="t" style="left:6.80px;top:421px;font-size:13px;line-height:17px;color:#262626;">11</span>
<div class="r" style="left:1px;top:438px;width:25px;height:1px;background:#c4c4c4;"></div>
<span class="t" style="left:6.80px;top:441px;font-size:13px;line-height:17px;color:#262626;">12</span>
<div class="r" style="left:1px;top:458px;width:25px;height:1px;background:#c4c4c4;"></div>
<span class="t" style="left:6.80px;top:461px;font-size:13px;line-height:17px;color:#262626;">13</span>
<div class="r" style="left:1px;top:478px;width:25px;height:1px;background:#c4c4c4;"></div>
<span class="t" style="left:6.80px;top:481px;font-size:13px;line-height:17px;color:#262626;">14</span>
<div class="r" style="left:1px;top:498px;width:25px;height:1px;background:#c4c4c4;"></div>
<span class="t" style="left:6.80px;top:525px;font-size:13px;line-height:17px;color:#262626;">15</span>
<div class="r" style="left:1px;top:542px;width:25px;height:1px;background:#c4c4c4;"></div>
<span class="t" style="left:6.80px;top:545px;font-size:13px;line-height:17px;color:#262626;">16</span>
<div class="r" style="left:1px;top:562px;width:25px;height:1px;background:#c4c4c4;"></div>
<div class="r" style="left:25px;top:318px;width:2px;height:21px;background:#217346;"></div>
<div class="r" style="left:52px;top:239px;width:453px;height:19px;background:#9bc2e6;"></div>
<div class="r" style="left:523px;top:239px;width:63px;height:19px;background:#9bc2e6;"></div>
<div class="r" style="left:51px;top:238px;width:455px;height:1px;background:#000;"></div>
<div class="r" style="left:522px;top:238px;width:65px;height:1px;background:#000;"></div>
<div class="r" style="left:51px;top:258px;width:455px;height:1px;background:#000;"></div>
<div class="r" style="left:522px;top:258px;width:65px;height:1px;background:#000;"></div>
<div class="r" style="left:51px;top:278px;width:455px;height:1px;background:#000;"></div>
<div class="r" style="left:522px;top:278px;width:65px;height:1px;background:#000;"></div>
<div class="r" style="left:51px;top:298px;width:455px;height:1px;background:#000;"></div>
<div class="r" style="left:522px;top:298px;width:65px;height:1px;background:#000;"></div>
<div class="r" style="left:51px;top:318px;width:455px;height:1px;background:#000;"></div>
<div class="r" style="left:522px;top:318px;width:65px;height:1px;background:#000;"></div>
<div class="r" style="left:51px;top:338px;width:455px;height:1px;background:#000;"></div>
<div class="r" style="left:522px;top:338px;width:65px;height:1px;background:#000;"></div>
<div class="r" style="left:51px;top:358px;width:455px;height:1px;background:#000;"></div>
<div class="r" style="left:522px;top:358px;width:65px;height:1px;background:#000;"></div>
<div class="r" style="left:51px;top:378px;width:455px;height:1px;background:#000;"></div>
<div class="r" style="left:522px;top:378px;width:65px;height:1px;background:#000;"></div>
<div class="r" style="left:51px;top:398px;width:455px;height:1px;background:#000;"></div>
<div class="r" style="left:522px;top:398px;width:65px;height:1px;background:#000;"></div>
<div class="r" style="left:51px;top:418px;width:455px;height:1px;background:#000;"></div>
<div class="r" style="left:522px;top:418px;width:65px;height:1px;background:#000;"></div>
<div class="r" style="left:51px;top:438px;width:455px;height:1px;background:#000;"></div>
<div class="r" style="left:522px;top:438px;width:65px;height:1px;background:#000;"></div>
<div class="r" style="left:51px;top:458px;width:455px;height:1px;background:#000;"></div>
<div class="r" style="left:522px;top:458px;width:65px;height:1px;background:#000;"></div>
<div class="r" style="left:51px;top:238px;width:1px;height:221px;background:#000;"></div>
<div class="r" style="left:115px;top:238px;width:1px;height:221px;background:#000;"></div>
<div class="r" style="left:243px;top:238px;width:1px;height:221px;background:#000;"></div>
<div class="r" style="left:344px;top:238px;width:1px;height:221px;background:#000;"></div>
<div class="r" style="left:441px;top:238px;width:1px;height:221px;background:#000;"></div>
<div class="r" style="left:505px;top:238px;width:1px;height:221px;background:#000;"></div>
<div class="r" style="left:522px;top:238px;width:1px;height:221px;background:#000;"></div>
<div class="r" style="left:586px;top:238px;width:1px;height:221px;background:#000;"></div>
<span class="t" style="left:76.00px;top:241px;font-size:13px;line-height:17px;color:#000;font-weight:bold;">№</span>
<span class="t" style="left:164.50px;top:241px;font-size:13px;line-height:17px;color:#000;font-weight:bold;letter-spacing:-0.500px;">ФИО</span>
<span class="t" style="left:261.85px;top:241px;font-size:13px;line-height:17px;color:#000;font-weight:bold;letter-spacing:-0.162px;">Категория</span>
<span class="t" style="left:364.50px;top:241px;font-size:13px;line-height:17px;color:#000;font-weight:bold;letter-spacing:0.167px;">Предмет</span>
<span class="t" style="left:445.85px;top:241px;font-size:13px;line-height:17px;color:#000;font-weight:bold;letter-spacing:-0.671px;">Зарплата</span>
<span class="t" style="left:529.55px;top:241px;font-size:13px;line-height:17px;color:#000;font-weight:bold;letter-spacing:0.060px;">Премия</span>
<span class="t" style="left:80.20px;top:261px;font-size:13px;line-height:17px;color:#000;">1</span>
<span class="t" style="left:118.50px;top:261px;font-size:13px;line-height:17px;color:#000;letter-spacing:0.027px;">Петрова Н.В.</span>
<span class="t" style="left:271.85px;top:261px;font-size:13px;line-height:17px;color:#000;letter-spacing:-0.060px;">Первая</span>
<span class="t" style="left:347.40px;top:261px;font-size:13px;line-height:17px;color:#000;letter-spacing:0.140px;">Физика</span>
<span class="t" style="left:462.80px;top:261px;font-size:13px;line-height:17px;color:#000;">300</span>
<span class="t" style="left:543.40px;top:261px;font-size:13px;line-height:17px;color:#000;">100</span>
<span class="t" style="left:80.20px;top:281px;font-size:13px;line-height:17px;color:#000;">2</span>
<span class="t" style="left:155.00px;top:281px;font-size:13px;line-height:17px;color:#000;letter-spacing:0.273px;">Иванова Д.М.</span>
<span class="t" style="left:271.85px;top:281px;font-size:13px;line-height:17px;color:#000;letter-spacing:-0.060px;">Первая</span>
<span class="t" style="left:347.40px;top:281px;font-size:13px;line-height:17px;color:#000;letter-spacing:0.333px;">Математика</span>
<span class="t" style="left:462.80px;top:281px;font-size:13px;line-height:17px;color:#000;">300</span>
<span class="t" style="left:543.40px;top:281px;font-size:13px;line-height:17px;color:#000;">100</span>
<span class="t" style="left:80.20px;top:301px;font-size:13px;line-height:17px;color:#000;">3</span>
<span class="t" style="left:175.50px;top:301px;font-size:13px;line-height:17px;color:#000;letter-spacing:0.056px;">Козел П.Э.</span>
<span class="t" style="left:272.70px;top:301px;font-size:13px;line-height:17px;color:#000;">Вторая</span>
<span class="t" style="left:347.40px;top:301px;font-size:13px;line-height:17px;color:#000;letter-spacing:0.283px;">История</span>
<span class="t" style="left:462.80px;top:301px;font-size:13px;line-height:17px;color:#000;">200</span>
<span class="t" style="left:543.40px;top:301px;font-size:13px;line-height:17px;color:#000;">100</span>
<span class="t" style="left:80.20px;top:321px;font-size:13px;line-height:17px;color:#000;">4</span>
<span class="t" style="left:139.40px;top:321px;font-size:13px;line-height:17px;color:#000;letter-spacing:0.200px;">Мартынова Л.П.</span>
<span class="t" style="left:271.85px;top:321px;font-size:13px;line-height:17px;color:#000;letter-spacing:-0.060px;">Первая</span>
<span class="t" style="left:347.40px;top:321px;font-size:13px;line-height:17px;color:#000;letter-spacing:0.333px;">Математика</span>
<span class="t" style="left:462.80px;top:321px;font-size:13px;line-height:17px;color:#000;">300</span>
<span class="t" style="left:543.40px;top:321px;font-size:13px;line-height:17px;color:#000;">100</span>
<span class="t" style="left:80.20px;top:341px;font-size:13px;line-height:17px;color:#000;">5</span>
<span class="t" style="left:142.40px;top:341px;font-size:13px;line-height:17px;color:#000;letter-spacing:0.277px;">Боцмонова Т.А.</span>
<span class="t" style="left:271.85px;top:341px;font-size:13px;line-height:17px;color:#000;letter-spacing:-0.060px;">Первая</span>
<span class="t" style="left:347.40px;top:341px;font-size:13px;line-height:17px;color:#000;letter-spacing:0.080px;">Физ-ра</span>
<span class="t" style="left:462.80px;top:341px;font-size:13px;line-height:17px;color:#000;">300</span>
<span class="t" style="left:543.40px;top:341px;font-size:13px;line-height:17px;color:#000;">100</span>
<span class="t" style="left:80.20px;top:361px;font-size:13px;line-height:17px;color:#000;">6</span>
<span class="t" style="left:146.50px;top:361px;font-size:13px;line-height:17px;color:#000;letter-spacing:0.292px;">Пелерман В.И.</span>
<span class="t" style="left:269.95px;top:361px;font-size:13px;line-height:17px;color:#000;letter-spacing:-0.100px;">Высшая</span>
<span class="t" style="left:347.40px;top:361px;font-size:13px;line-height:17px;color:#000;letter-spacing:0.218px;">Русский язык</span>
<span class="t" style="left:462.80px;top:361px;font-size:13px;line-height:17px;color:#000;">400</span>
<span class="t" style="left:550.90px;top:361px;font-size:13px;line-height:17px;color:#000;">0</span>
<span class="t" style="left:80.20px;top:381px;font-size:13px;line-height:17px;color:#000;">7</span>
<span class="t" style="left:118.50px;top:381px;font-size:13px;line-height:17px;color:#000;letter-spacing:0.300px;">Ушаков П.М.</span>
<span class="t" style="left:272.70px;top:381px;font-size:13px;line-height:17px;color:#000;">Вторая</span>
<span class="t" style="left:347.40px;top:381px;font-size:13px;line-height:17px;color:#000;letter-spacing:0.071px;">Биология</span>
<span class="t" style="left:462.80px;top:381px;font-size:13px;line-height:17px;color:#000;">200</span>
<span class="t" style="left:543.40px;top:381px;font-size:13px;line-height:17px;color:#000;">100</span>
<span class="t" style="left:80.20px;top:401px;font-size:13px;line-height:17px;color:#000;">8</span>
<span class="t" style="left:118.50px;top:401px;font-size:13px;line-height:17px;color:#000;letter-spacing:0.417px;">Георгиев Д.М.</span>
<span class="t" style="left:257.20px;top:401px;font-size:13px;line-height:17px;color:#000;letter-spacing:0.111px;">Специалист</span>
<span class="t" style="left:347.40px;top:401px;font-size:13px;line-height:17px;color:#000;">География</span>
<span class="t" style="left:462.80px;top:401px;font-size:13px;line-height:17px;color:#000;">100</span>
<span class="t" style="left:550.90px;top:401px;font-size:13px;line-height:17px;color:#000;">0</span>
<span class="t" style="left:80.20px;top:421px;font-size:13px;line-height:17px;color:#000;">9</span>
<span class="t" style="left:118.50px;top:421px;font-size:13px;line-height:17px;color:#000;letter-spacing:0.091px;">Соколов К.С.</span>
<span class="t" style="left:257.20px;top:421px;font-size:13px;line-height:17px;color:#000;letter-spacing:0.111px;">Специалист</span>
<span class="t" style="left:347.40px;top:421px;font-size:13px;line-height:17px;color:#000;">Химия</span>
<span class="t" style="left:462.80px;top:421px;font-size:13px;line-height:17px;color:#000;">100</span>
<span class="t" style="left:550.90px;top:421px;font-size:13px;line-height:17px;color:#000;">0</span>
<span class="t" style="left:76.70px;top:441px;font-size:13px;line-height:17px;color:#000;">10</span>
<span class="t" style="left:118.50px;top:441px;font-size:13px;line-height:17px;color:#000;letter-spacing:-0.444px;">Седов С.С.</span>
<span class="t" style="left:269.95px;top:441px;font-size:13px;line-height:17px;color:#000;letter-spacing:-0.100px;">Высшая</span>
<span class="t" style="left:347.40px;top:441px;font-size:13px;line-height:17px;color:#000;letter-spacing:0.333px;">Математика</span>
<span class="t" style="left:462.80px;top:441px;font-size:13px;line-height:17px;color:#000;">400</span>
<span class="t" style="left:550.90px;top:441px;font-size:13px;line-height:17px;color:#000;">0</span>
<div class="r" style="left:242px;top:317px;width:104px;height:22px;box-sizing:border-box;border:2px solid #217346;"></div>
<div class="r" style="left:341px;top:335px;width:6px;height:6px;background:#fff;"></div>
<div class="r" style="left:342px;top:336px;width:5px;height:5px;background:#217346;"></div>
<div class="r" style="left:823px;top:199px;width:20px;height:371px;background:#e6e6e6;"></div>
<div class="r" style="left:822px;top:218px;width:1px;height:353px;background:#9e9e9e;"></div>
<div class="r" style="left:826px;top:201px;width:15px;height:15px;background:#fff;border:1px solid #ababab;box-sizing:border-box;"></div>
<svg class="r" style="left:830px;top:206px;" width="7" height="4" viewBox="0 0 7 4"><path d="M0 4L3.500 0L7 4z" fill="#666"/></svg>
<div class="r" style="left:826px;top:216px;width:15px;height:255px;background:#fff;border:1px solid #ababab;box-sizing:border-box;"></div>
<div class="r" style="left:826px;top:471px;width:15px;height:85px;background:#dadada;"></div>
<div class="r" style="left:826px;top:556px;width:15px;height:15px;background:#fff;border:1px solid #d0d0d0;box-sizing:border-box;"></div>
<svg class="r" style="left:830px;top:562px;" width="7" height="4" viewBox="0 0 7 4"><path d="M0 0H7L3.500 4z" fill="#666"/></svg>
<div class="r" style="left:1px;top:570px;width:842px;height:28px;background:#e6e6e6;"></div>
<div class="r" style="left:1px;top:570px;width:100px;height:1px;background:#9e9e9e;"></div>
<div class="r" style="left:162px;top:570px;width:661px;height:1px;background:#9e9e9e;"></div>
<div class="r" style="left:101px;top:570px;width:61px;height:25px;background:#fff;"></div>
<div class="r" style="left:101px;top:570px;width:1px;height:23px;background:#8f8f8f;"></div>
<div class="r" style="left:161px;top:570px;width:1px;height:23px;background:#8f8f8f;"></div>
<div class="r" style="left:101px;top:593px;width:61px;height:2px;background:#217346;"></div>
<span class="t g" style="left:113.00px;top:576px;font-size:12px;line-height:16px;color:#217346;font-weight:bold;">Лист1</span>
<span class="t g" style="left:174.40px;top:576px;font-size:12px;line-height:16px;color:#444;letter-spacing:-0.100px;">Лист2</span>
<div class="r" style="left:220px;top:573px;width:1px;height:21px;background:#8a8a8a;"></div>
<svg class="r" style="left:254px;top:576px;" width="16" height="16" viewBox="0 0 16 16"><circle cx="8" cy="8" r="7.500" fill="none" stroke="#777" stroke-width="1.100"/><path d="M8 4.500v7M4.500 8h7" stroke="#666" stroke-width="1.600"/></svg>
<div class="r" style="left:507px;top:579px;width:2px;height:2px;background:#bcbcbc;"></div>
<div class="r" style="left:507px;top:583px;width:2px;height:2px;background:#bcbcbc;"></div>
<div class="r" style="left:507px;top:587px;width:2px;height:2px;background:#bcbcbc;"></div>
<div class="r" style="left:524px;top:577px;width:15px;height:15px;background:#fff;border:1px solid #b4b4b4;box-sizing:border-box;"></div>
<svg class="r" style="left:529px;top:581px;" width="4" height="7" viewBox="0 0 4 7"><path d="M4 0V7L0 3.500z" fill="#666"/></svg>
<div class="r" style="left:538px;top:577px;width:245px;height:15px;background:#fff;border:1px solid #b4b4b4;box-sizing:border-box;"></div>
<div class="r" style="left:783px;top:577px;width:25px;height:15px;background:#dadada;"></div>
<div class="r" style="left:808px;top:577px;width:15px;height:15px;background:#fff;border:1px solid #b4b4b4;box-sizing:border-box;"></div>
<svg class="r" style="left:814px;top:581px;" width="4" height="7" viewBox="0 0 4 7"><path d="M0 0V7L4 3.500z" fill="#666"/></svg>
<div class="r" style="left:1px;top:598px;width:842px;height:22px;background:#f1f1f1;"></div>
<div class="r" style="left:1px;top:598px;width:842px;height:1px;background:#cdcdcd;"></div>
<span class="t g" style="left:8.30px;top:601px;font-size:12px;line-height:16px;color:#444;letter-spacing:-0.120px;">Готово</span>
<svg class="r" style="left:65px;top:602px;" width="13" height="13" viewBox="0 0 13 13"><path d="M6.500 1.500H12.500V12.500H1.500V6.500" fill="none" stroke="#6a6a6a"/><rect x="7.500" y="1" width="5.500" height="2.500" fill="#6a6a6a"/><circle cx="3.100" cy="3.400" r="3" fill="#6a6a6a"/><path d="M3.500 6.500h2M6.500 6.500h2M9.500 6.500h2M3.500 8.500h2M6.500 8.500h2M9.500 8.500h2M3.500 10.500h2M6.500 10.500h2M9.500 10.500h2" stroke="#6a6a6a"/></svg>
<div class="r" style="left:542px;top:599px;width:37px;height:21px;background:#c6c6c6;"></div>
<svg class="r" style="left:553px;top:603px;" width="13" height="12" viewBox="0 0 13 12"><rect x=".5" y=".5" width="12" height="11" fill="none" stroke="#555"/><path d="M.5 4.500h12M.5 7.500h12M4.500 .5v11M8.500 .5v11" stroke="#555"/></svg>
<svg class="r" style="left:591px;top:603px;" width="14" height="12" viewBox="0 0 14 12"><rect x=".5" y=".5" width="13" height="11" fill="none" stroke="#555"/><rect x="3.500" y="3.500" width="7" height="5.500" fill="none" stroke="#555"/><path d="M5 4.500h4M5 6h4M5 7.500h4" stroke="#555" stroke-width=".7"/></svg>
<svg class="r" style="left:629px;top:603px;" width="14" height="12" viewBox="0 0 14 12"><path d="M.5 .5h13v11h-13z" fill="none" stroke="#555"/><path d="M4.500 .5v5.500M9.500 .5v5.500M.5 6.500h9" fill="none" stroke="#555"/></svg>
<div class="r" style="left:660px;top:608px;width:6px;height:2px;background:#555;"></div>
<div class="r" style="left:670px;top:608px;width:100px;height:1px;background:#8a8a8a;"></div>
<div class="r" style="left:718px;top:603px;width:4px;height:12px;background:#555;"></div>
<div class="r" style="left:774px;top:608px;width:9px;height:1.6px;background:#555;"></div>
<div class="r" style="left:777.7px;top:604.5px;width:1.6px;height:9px;background:#555;"></div>
<span class="t g" style="left:798.60px;top:600px;font-size:12px;line-height:16px;color:#444;letter-spacing:-1.533px;">100%</span>
<svg class="r" style="left:0;top:540px;" width="300" height="62" viewBox="0 540 300 62">
<g opacity=".86">
<rect x="22.800" y="546.300" width="60.800" height="48.400" rx="5" fill="rgba(255,255,255,.8)" stroke="#bdbdbd" stroke-width="1"/>
<rect x="26.300" y="549.700" width="53.800" height="41.500" rx="4" fill="rgba(255,255,255,.35)" stroke="#bebebe" stroke-width="2.600"/>
<path d="M42 595h19.500v2.800a1.500 1.500 0 0 1-1.500 1.500h-16.500a1.500 1.500 0 0 1-1.500-1.500z" fill="#f6f6f6" stroke="#c4c4c4" stroke-width="1"/>
<path d="M52.300 575.300L38 561" stroke="#bcbcbc" stroke-width="4" stroke-linecap="round"/><path d="M30.700 553.600l14.700 5.200l-8.900 8.400z" fill="#bcbcbc"/>
<path d="M32.300 579.800l-4.300 3.400l4.300 3.400zM56.900 579.800l4.300 3.400l-4.300 3.400z" fill="#d6d6d6"/>
</g>
<g opacity=".58" stroke-linecap="round" stroke-linejoin="round"><path d="M111.800 566.900v6.900a5 5 0 0 1-5 5h-7.400a5 5 0 0 1-5-5v-6.900a5 5 0 0 1 5-5h7.400a5 5 0 0 1 5 5z M139.300 561.900H122.800a4.200 4.200 0 0 0 0 8.400h12a4.250 4.250 0 0 1 0 8.500H118.700" fill="none" stroke="#fff" stroke-width="7"/><path d="M111.800 566.900v6.900a5 5 0 0 1-5 5h-7.400a5 5 0 0 1-5-5v-6.900a5 5 0 0 1 5-5h7.400a5 5 0 0 1 5 5z M139.300 561.900H122.800a4.200 4.200 0 0 0 0 8.400h12a4.250 4.250 0 0 1 0 8.500H118.700" fill="none" stroke="#f4758b" stroke-width="5.600"/></g>
<g opacity=".72" stroke-linecap="round" stroke-linejoin="round"><path d="M157.200 561.700V581.100M175.200 561.700V581.100M157.200 571.200H175.200 M183.200 574.700H198v-2.800a3.700 3.700 0 0 0-3.700-3.700h-7.400a3.700 3.700 0 0 0-3.700 3.700v5.400a3.700 3.700 0 0 0 3.700 3.700H197.800 M204.700 561.700V581.100 M213.200 568.400V586M213.200 571.900a3.700 3.700 0 0 1 3.700-3.700h8a3.700 3.700 0 0 1 3.700 3.700v5.400a3.700 3.700 0 0 1-3.700 3.700H213.200 M235.400 574.700h14.800v-2.800a3.700 3.700 0 0 0-3.700-3.700h-7.400a3.700 3.700 0 0 0-3.700 3.700v5.400a3.700 3.700 0 0 0 3.700 3.700H250 M257.900 568.400V581.100M257.900 572.400a4.200 4.200 0 0 1 4.200-4.200H268.600" fill="none" stroke="#8e8e8e" stroke-width="6.700"/><path d="M157.200 561.700V581.100M175.200 561.700V581.100M157.200 571.200H175.200 M183.200 574.700H198v-2.800a3.700 3.700 0 0 0-3.700-3.700h-7.400a3.700 3.700 0 0 0-3.700 3.700v5.400a3.700 3.700 0 0 0 3.700 3.700H197.800 M204.700 561.700V581.100 M213.200 568.400V586M213.200 571.900a3.700 3.700 0 0 1 3.700-3.700h8a3.700 3.700 0 0 1 3.700 3.700v5.400a3.700 3.700 0 0 1-3.700 3.700H213.200 M235.400 574.700h14.800v-2.800a3.700 3.700 0 0 0-3.700-3.700h-7.400a3.700 3.700 0 0 0-3.700 3.700v5.400a3.700 3.700 0 0 0 3.700 3.700H250 M257.900 568.400V581.100M257.900 572.400a4.200 4.200 0 0 1 4.200-4.200H268.600" fill="none" stroke="#fff" stroke-width="4.700"/></g>
</svg>
<div class="r" style="left:0px;top:36px;width:1px;height:585px;background:#217346;"></div>
<div class="r" style="left:843px;top:60px;width:1px;height:560px;background:#f0f0f0;"></div>
<div class="r" style="left:844px;top:0px;width:1px;height:621px;background:#217346;"></div>
<div class="r" style="left:0px;top:620px;width:845px;height:1px;background:#217346;"></div>
</body></html>
